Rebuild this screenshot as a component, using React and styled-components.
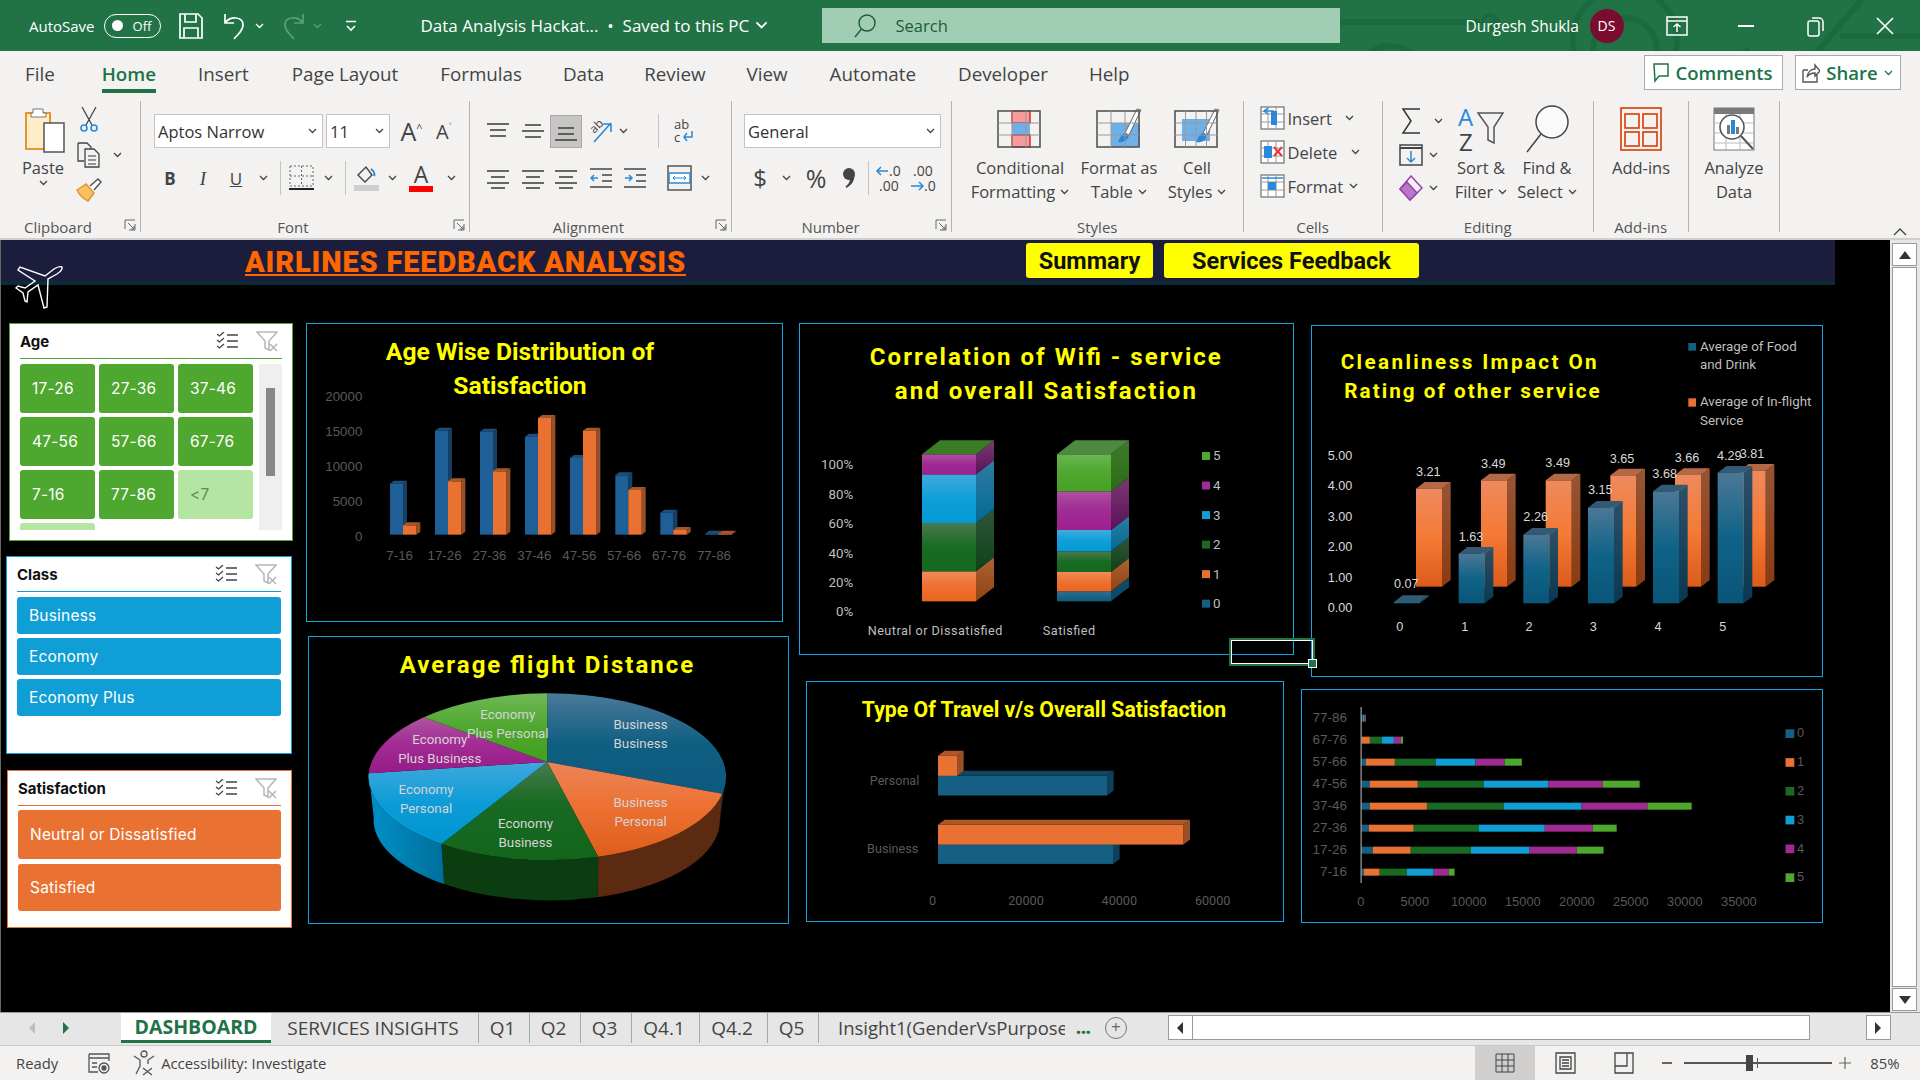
import React from "react"
import styled, { createGlobalStyle } from "styled-components"

const UI = `"Open Sans", "Noto Sans", sans-serif`
const CHART = `Roboto, "Liberation Sans", sans-serif`
const ARIAL = `"Liberation Sans", Arial, sans-serif`

const Global = createGlobalStyle`
html, body { margin: 0; padding: 0; background: #000; overflow: hidden; }
* { box-sizing: border-box; }
`

const Page = styled.div`
width: 1920px;
height: 1080px;
display: flex;
flex-direction: column;
font-family: ${UI};
position: relative;
overflow: hidden;
`

/* ---------- small drawing helpers ---------- */
const Ico = styled.svg`
display: block;
flex: none;
margin-left: ${p => p.$ml || 0}px;
margin-top: ${p => p.$mt || 0}px;
`
const Chev = ({ ml, color = "#444", w = 9 }) => (
  <Ico $ml={ml} width={w} height={(w * 2) / 3} viewBox="0 0 9 6" fill="none"><path d="M1 1l3.5 3.5L8 1" stroke={color} strokeWidth="1.3" /></Ico>
)
const Lines = ({ rows, w = 22, h = 22, ml }) => (
  <Ico $ml={ml} width={w} height={h} viewBox={`0 0 ${w} ${h}`} fill="none">
    {rows.map((r, i) => <line key={i} x1={r[0]} x2={r[1]} y1={r[2]} y2={r[2]} stroke={r[3] || "#444"} strokeWidth="1.6" />)}
  </Ico>
)

/* ---------- title bar ---------- */
const TitleBar = styled.header`
height: 51px;
flex: none;
background: #217346;
color: #fff;
display: flex;
align-items: center;
padding-left: 29px;
position: relative;
overflow: hidden;
`
const Circuit = styled.svg`
position: absolute;
left: 1340px;
top: 0;
`
const TitleSlot = styled.div`
position: relative;
flex: none;
display: flex;
align-items: center;
margin-left: ${p => p.$ml || 0}px;
width: ${p => (p.$w ? p.$w + "px" : "auto")};
font-size: ${p => p.$fs || 15}px;
white-space: nowrap;
`
const Toggle = styled.div`
position: relative;
flex: none;
width: 57px;
height: 24px;
margin-left: 9px;
border: 1.5px solid #fff;
border-radius: 12px;
font-size: 13px;
display: flex;
align-items: center;
padding-left: 28px;
&::before {
  content: "";
  position: absolute;
  left: 7px;
  top: 5px;
  width: 11px;
  height: 11px;
  border-radius: 50%;
  background: #fff;
}
`
const SearchBox = styled.div`
position: relative;
flex: none;
width: 518px;
height: 35px;
background: #a0cdb4;
color: #1c5c3a;
font-size: 16.5px;
display: flex;
align-items: center;
padding-left: 30px;
gap: 18px;
`
const Avatar = styled.div`
position: relative;
flex: none;
width: 34px;
height: 34px;
margin-left: 14px;
border-radius: 50%;
background: #7a0c2e;
font-size: 14px;
display: flex;
align-items: center;
justify-content: center;
`

/* ---------- ribbon ---------- */
const TabRow = styled.nav`
height: 45px;
flex: none;
background: #f3f2f1;
display: flex;
padding-left: 25px;
align-items: flex-start;
position: relative;
`
const Tab = styled.div`
height: 42px;
margin-right: ${p => p.$gap}px;
padding-top: 10px;
font-size: 18.8px;
color: ${p => (p.$active ? "#217346" : "#444")};
font-weight: ${p => (p.$active ? 600 : 400)};
border-bottom: ${p => (p.$active ? "4px solid #217346" : "none")};
white-space: nowrap;
`
const TopBtn = styled.div`
flex: none;
height: 35px;
margin-top: 4px;
margin-left: ${p => p.$ml}px;
width: ${p => p.$w}px;
background: #fff;
border: 1px solid #a9a9a9;
display: flex;
align-items: center;
justify-content: center;
gap: 6px;
color: #217346;
font-weight: 600;
font-size: 18.5px;
`
const Ribbon = styled.section`
height: 144px;
flex: none;
background: #f3f2f1;
border-bottom: 2px solid #d2d0ce;
display: flex;
padding-top: 5px;
position: relative;
`
const Group = styled.div`
position: relative;
flex: none;
width: ${p => p.$w}px;
height: 131px;
border-right: 1px solid #b5b3b1;
display: flex;
flex-direction: column;
`
const GroupBody = styled.div`
flex: 1;
display: flex;
min-height: 0;
padding-left: ${p => p.$pl || 0}px;
flex-direction: ${p => (p.$col ? "column" : "row")};
`
const GroupLabel = styled.div`
height: 20px;
flex: none;
text-align: center;
font-size: 15px;
line-height: 20px;
color: #555;
padding-right: ${p => p.$pr || 0}px;
margin-bottom: -5px;
`
const Launcher = styled.svg`
position: absolute;
right: 4px;
bottom: 1px;
`
const Collapse = styled.svg`
position: absolute;
right: 13px;
bottom: 2px;
`
const Big = styled.div`
flex: none;
width: ${p => p.$w}px;
margin-left: ${p => p.$ml || 0}px;
display: flex;
flex-direction: column;
align-items: center;
padding-top: 4px;
`
const BigIcon = styled.div`
height: 51px;
flex: none;
`
const BigText = styled.div`
font-size: 16.5px;
line-height: 24px;
color: #444;
white-space: nowrap;
display: flex;
align-items: center;
gap: 5px;
`
const ToolRow = styled.div`
display: flex;
align-items: center;
height: ${p => p.$h || 34}px;
margin-top: ${p => p.$mt || 0}px;
margin-left: ${p => p.$ml || 0}px;
`
const ToolCol = styled.div`
flex: none;
width: ${p => p.$w}px;
`
const Combo = styled.div`
flex: none;
width: ${p => p.$w}px;
margin-left: ${p => p.$ml || 0}px;
height: 34px;
background: #fff;
border: 1px solid #c4c4c4;
display: flex;
align-items: center;
justify-content: space-between;
padding: 0 5px 0 3px;
font-size: 16.5px;
color: #333;
`
const ToolGlyph = styled.span`
flex: none;
width: ${p => p.$w}px;
margin-left: ${p => p.$ml || 0}px;
text-align: center;
font-family: ${p => p.$serif ? `"Liberation Serif", serif` : UI};
font-size: ${p => p.$fs || 17}px;
font-weight: ${p => p.$bold ? 700 : 400};
font-style: ${p => p.$it ? "italic" : "normal"};
text-decoration: ${p => p.$ul ? "underline" : "none"};
color: #444;
line-height: 1;
`
const Caret = styled.sup`
font-size: 11px;
color: ${p => p.$c || "#444"};
`
const VSep = styled.span`
flex: none;
width: 1px;
height: ${p => p.$h || 34}px;
background: #c4c4c4;
margin-left: ${p => p.$ml}px;
`
const Selected = styled.div`
flex: none;
margin-left: ${p => p.$ml}px;
width: 32px;
height: 33px;
background: #c8c6c4;
border: 1px solid #aaa;
display: flex;
align-items: center;
justify-content: center;
`
const CellLabel = styled.span`
flex: none;
width: ${p => p.$w}px;
margin-left: 3px;
font-size: 16.5px;
color: #444;
`

/* ---------- sheet ---------- */
const SheetRow = styled.main`
flex: 1;
display: flex;
min-height: 0;
background: #000;
position: relative;
`
const Sheet = styled.div`
position: relative;
width: 1890px;
flex: none;
display: flex;
flex-direction: column;
border-left: 1px solid #666;
`
const Banner = styled.div`
width: 1834px;
height: 45px;
flex: none;
background: #1c1d3d;
border-bottom: 4px solid #0c2b36;
display: flex;
align-items: center;
`
const BannerTitle = styled.h1`
margin: 2px 0 0 244px;
width: 441px;
flex: none;
font-family: ${CHART};
font-weight: 900;
font-size: 29px;
line-height: 32px;
letter-spacing: 0.85px;
color: #ff6600;
white-space: nowrap;
text-decoration: underline;
text-decoration-thickness: 2px;
text-underline-offset: 2px;
`
const NavBtn = styled.div`
flex: none;
margin-left: ${p => p.$ml}px;
width: ${p => p.$w}px;
height: 35px;
background: #ffff00;
border-radius: 3px;
font-family: ${CHART};
font-weight: 700;
font-size: 23.5px;
color: #111;
display: flex;
align-items: center;
justify-content: center;
`
const Plane = styled.svg`
position: absolute;
left: 13px;
top: 24px;
`
const Board = styled.div`
flex: 1;
display: flex;
align-items: flex-start;
`
const Column = styled.div`
flex: none;
width: ${p => p.$w}px;
display: flex;
flex-direction: column;
align-items: flex-start;
`
const SelCell = styled.div`
position: absolute;
left: 1228px;
top: 398px;
width: 86px;
height: 28px;
border: 2px solid #217346;
outline: 1px solid #fff;
outline-offset: -3px;
&::after {
  content: "";
  position: absolute;
  right: -4px;
  bottom: -4px;
  width: 7px;
  height: 7px;
  background: #217346;
  border: 1px solid #fff;
}
`

/* ---------- slicers ---------- */
const Slicer = styled.section`
flex: none;
width: ${p => p.$w}px;
height: ${p => p.$h}px;
margin-top: ${p => p.$mt}px;
margin-left: ${p => p.$ml || 0}px;
background: #fff;
border: 1.5px solid ${p => p.$accent};
padding: 0 10px;
`
const SlicerHead = styled.div`
height: ${p => p.$h || 35}px;
border-bottom: 1.5px solid ${p => p.$accent};
display: flex;
align-items: center;
font-family: Inter, sans-serif;
font-weight: 700;
font-size: 15px;
color: #111;
`
const SlicerTools = styled.div`
margin-left: auto;
margin-right: 4px;
display: flex;
align-items: center;
gap: 18px;
`
const AgeBody = styled.div`
display: flex;
margin-top: 5px;
height: 166px;
overflow: hidden;
`
const AgeGrid = styled.div`
width: 233px;
flex: none;
display: grid;
grid-template-columns: repeat(3, 75px);
grid-auto-rows: 49px;
gap: 4px;
`
const Scroll = styled.div`
flex: none;
width: 23px;
margin-left: 6px;
background: #efefef;
padding: 24px 7px 0;
&::before {
  content: "";
  display: block;
  height: 88px;
  background: #888;
}
`
const ClassList = styled.div`
display: flex;
flex-direction: column;
gap: ${p => p.$gap || 4}px;
margin-top: ${p => p.$mt || 5}px;
`
const Item = styled.div`
height: ${p => p.$h}px;
border-radius: 3px;
background: ${p => p.$bg};
color: ${p => p.$fg || "#fff"};
font-family: Inter, sans-serif;
font-size: 15.5px;
letter-spacing: 0.2px;
display: flex;
align-items: center;
padding-left: ${p => p.$pl || 12}px;
white-space: nowrap;
`

/* ---------- charts ---------- */
const ChartBox = styled.section`
flex: none;
width: ${p => p.$w}px;
height: ${p => p.$h}px;
margin-top: ${p => p.$mt}px;
margin-left: ${p => p.$ml || 0}px;
outline: 1.2px solid #0ea5e0;
outline-offset: -1px;
`
const ChartSvg = styled.svg`
display: block;
width: 100%;
height: 100%;
`
const ChartTitle = styled.text`
font-family: ${CHART};
font-weight: 700;
font-size: ${p => p.$fs || 69}px;
fill: #ffff00;
text-anchor: middle;
`
const Axis = styled.text`
font-family: ${p => p.$arial ? ARIAL : CHART};
font-size: ${p => p.$fs || 38}px;
fill: ${p => p.$fill || "#595959"};
text-anchor: ${p => p.$anchor || "middle"};
dominant-baseline: central;
`

const Bar3D = ({ x, y, w, b, dx, dy, front, top, side }) => (
  <g>
    <path d={`M${x + w} ${y}l${dx} ${dy}V${b + dy}L${x + w} ${b}Z`} fill={side} />
    {top && <path d={`M${x} ${y}h${w}l${dx} ${dy}h${-w}Z`} fill={top} />}
    <rect x={x} y={y} width={w} height={b - y} fill={front} />
  </g>
)
const VGrad = ({ id, stops }) => (
  <linearGradient id={id} x1="0" y1="0" x2="0" y2="1">
    {stops.map((s, i) => <stop key={i} offset={s[0]} stopColor={s[1]} />)}
  </linearGradient>
)

const ageBars = [
  [270, 507, 632], [405, 348, 500], [540, 351, 470], [675, 366, 310],
  [810, 430, 348], [946, 482, 526], [1081, 594, 646], [1216, 657, 657],
]
const ageLabels = ["7-16", "17-26", "27-36", "37-46", "47-56", "57-66", "67-76", "77-86"]

function AgeChart() {
  return (
    <ChartSvg viewBox="18 25 1431 897" preserveAspectRatio="none">
      <ChartTitle x="660" y="135" textLength="805" lengthAdjust="spacingAndGlyphs">Age Wise Distribution of</ChartTitle>
      <ChartTitle x="660" y="238" textLength="400" lengthAdjust="spacingAndGlyphs">Satisfaction</ChartTitle>
      {["20000", "15000", "10000", "5000", "0"].map((t, i) => (
        <Axis key={t} $arial $fs={40} $anchor="end" x="187" y={247 + i * 105}>{t}</Axis>
      ))}
      {ageBars.map((b, i) => (
        <g key={i}>
          <Bar3D x={b[0]} y={b[1]} w={39} b={660} dx={12} dy={-9} front="#1f5f97" top="#1d4f7c" side="#173f63" />
          <Bar3D x={b[0] + 39} y={b[2]} w={40} b={660} dx={12} dy={-9} front="#e97132" top="#a9562a" side="#97502a" />
        </g>
      ))}
      {ageLabels.map((t, i) => <Axis key={t} $arial $fs={40} x={299 + i * 134.7} y="723">{t}</Axis>)}
    </ChartSvg>
  )
}

const wifiColors = {
  navy: ["url(#w-navy)", "#0e4a68"],
  orange: ["url(#w-orange)", "url(#w-orange-s)"],
  dgreen: ["url(#w-dgreen)", "url(#w-dgreen-s)"],
  blue: ["url(#w-blue)", "url(#w-blue-s)"],
  purple: ["url(#w-purple)", "url(#w-purple-s)"],
  green: ["url(#w-green)", "url(#w-green-s)"],
}
const wifiStacks = [
  { x: 381, segs: [["orange", 845, 755], ["dgreen", 755, 610], ["blue", 610, 464], ["purple", 464, 404]], top: "#3a7d26" },
  { x: 786, segs: [["navy", 845, 815], ["orange", 815, 757], ["dgreen", 757, 695], ["blue", 695, 631], ["purple", 631, 515], ["green", 515, 404]], top: "#4d8a3f" },
]
const legendColors = ["#156082", "#e97132", "#196b24", "#0f9ed5", "#a02b93", "#4ea72e"]

function WifiChart() {
  return (
    <ChartSvg viewBox="12 10 1485 996" preserveAspectRatio="none">
      <defs>
        <VGrad id="w-navy" stops={[[0, "#2f6d8d"], [1, "#0e5a7c"]]} />
        <VGrad id="w-orange" stops={[[0, "#f28a58"], [0.5, "#ee7030"], [1, "#ec651f"]]} />
        <VGrad id="w-orange-s" stops={[[0, "#ac6236"], [1, "#91430f"]]} />
        <VGrad id="w-dgreen" stops={[[0, "#4a7a50"], [0.5, "#186c22"], [1, "#15691e"]]} />
        <VGrad id="w-dgreen-s" stops={[[0, "#30543a"], [1, "#0f4215"]]} />
        <VGrad id="w-blue" stops={[[0, "#40a9de"], [0.5, "#0f9fd8"], [1, "#049ad6"]]} />
        <VGrad id="w-blue-s" stops={[[0, "#2f7ba5"], [1, "#026a93"]]} />
        <VGrad id="w-purple" stops={[[0, "#ae519f"], [0.5, "#a02b93"], [1, "#9e1f8e"]]} />
        <VGrad id="w-purple-s" stops={[[0, "#763c70"], [1, "#5e1058"]]} />
        <VGrad id="w-green" stops={[[0, "#6ab651"], [0.5, "#4ea72e"], [1, "#45a322"]]} />
        <VGrad id="w-green-s" stops={[[0, "#3f7a2e"], [1, "#2b6c14"]]} />
      </defs>
      <ChartTitle $fs={72} x="751" y="135" textLength="1053" lengthAdjust="spacing">Correlation of Wifi - service</ChartTitle>
      <ChartTitle $fs={72} x="751" y="238" textLength="903" lengthAdjust="spacing">and overall Satisfaction</ChartTitle>
      {["100%", "80%", "60%", "40%", "20%", "0%"].map((t, i) => (
        <Axis key={t} $fs={40} $fill="#bfbfbf" $anchor="end" x="175" y={436 + i * 88.2}>{t}</Axis>
      ))}
      {wifiStacks.map(st => (
        <g key={st.x}>
          {st.segs.map(([c, b, y], i) => (
            <Bar3D key={c} x={st.x} y={y} w={162} b={b} dx={54} dy={-42} front={wifiColors[c][0]}
              side={wifiColors[c][1]} top={i === st.segs.length - 1 ? st.top : null} />
          ))}
        </g>
      ))}
      <Axis $fill="#bfbfbf" x="420" y="934" textLength="404">Neutral or Dissatisfied</Axis>
      <Axis $fill="#bfbfbf" x="822" y="934" textLength="157">Satisfied</Axis>
      {[5, 4, 3, 2, 1, 0].map((n, i) => {
        const cy = 409 + i * 88.6
        return (
          <g key={n}>
            <rect x="1221" y={cy - 12} width="24" height="24" fill={legendColors[n]} />
            <Axis $fs={40} $fill="#bfbfbf" $anchor="start" x="1254" y={cy}>{n}</Axis>
          </g>
        )
      })}
    </ChartSvg>
  )
}

const cleanOrange = [[333, 506, "3.21", 370, 456], [528, 481, "3.49", 565, 432], [722, 481, "3.49", 758, 429],
  [916, 466, "3.65", 951, 417], [1110, 465, "3.66", 1146, 414], [1304, 452, "3.81", 1341, 403]]
const cleanBlue = [[267, 846, "0.07", 304, 792], [461, 701, "1.63", 498, 651], [655, 644, "2.26", 692, 592],
  [849, 563, "3.15", 886, 510], [1044, 514, "3.68", 1079, 461], [1238, 458, "4.29", 1273, 408]]

function CleanChart() {
  return (
    <ChartSvg viewBox="18 15 1536 1056" preserveAspectRatio="none">
      <defs>
        <VGrad id="c-or" stops={[[0, "#ee8a5e"], [0.5, "#f47a35"], [1, "#dd5c1b"]]} />
        <VGrad id="c-ors" stops={[[0, "#975535"], [1, "#8a3b12"]]} />
        <VGrad id="c-bl" stops={[[0, "#4b7896"], [0.5, "#0f6388"], [1, "#0a5578"]]} />
        <VGrad id="c-bls" stops={[[0, "#2d4f68"], [1, "#0a3850"]]} />
      </defs>
      <ChartTitle $fs={62} x="491" y="147" textLength="768" lengthAdjust="spacing">Cleanliness Impact On</ChartTitle>
      <ChartTitle $fs={62} x="501" y="233" textLength="766" lengthAdjust="spacing">Rating of other service</ChartTitle>
      <rect x="1150" y="69" width="23" height="23" fill="#156082" />
      <Axis $fs={40} $fill="#bfbfbf" $anchor="start" x="1185" y="79">Average of Food</Axis>
      <Axis $fs={40} $fill="#bfbfbf" $anchor="start" x="1185" y="133">and Drink</Axis>
      <rect x="1150" y="235" width="23" height="25" fill="#e97132" />
      <Axis $fs={40} $fill="#bfbfbf" $anchor="start" x="1185" y="245">Average of In-flight</Axis>
      <Axis $fs={40} $fill="#bfbfbf" $anchor="start" x="1185" y="301">Service</Axis>
      {["5.00", "4.00", "3.00", "2.00", "1.00", "0.00"].map((t, i) => (
        <Axis key={t} $arial $fill="#d9d9d9" $anchor="end" x="142" y={408 + i * 91.4}>{t}</Axis>
      ))}
      {cleanOrange.map(b => <Bar3D key={b[0]} x={b[0]} y={b[1]} w={78} b={800} dx={26} dy={-20} front="url(#c-or)" top="#b46843" side="url(#c-ors)" />)}
      {cleanBlue.map(b => <Bar3D key={b[0]} x={b[0]} y={b[1]} w={78} b={850} dx={26} dy={-20} front="url(#c-bl)" top="#335a75" side="url(#c-bls)" />)}
      {[...cleanOrange, ...cleanBlue].map(b => <Axis key={b[0]} $arial $fill="#d9d9d9" x={b[3]} y={b[4]}>{b[2]}</Axis>)}
      {[284, 479, 672, 865, 1059, 1253].map((x, i) => <Axis key={x} $arial $fill="#d9d9d9" x={x} y="921">{i}</Axis>)}
    </ChartSvg>
  )
}

const pieTop = [
  ["p-navy", "M742 396L742 190A535 250 0 0 1 1267 491Z"],
  ["p-orange", "M742 396L1267 491A535 250 0 0 1 895 680Z"],
  ["p-dgreen", "M742 396L895 680A535 250 0 0 1 425 642Z"],
  ["p-blue", "M742 396L425 642A535 250 0 0 1 207 430Z"],
  ["p-purple", "M742 396L207 430A535 250 0 0 1 372 262Z"],
  ["p-green", "M742 396L372 262A535 250 0 0 1 742 190Z"],
]
const pieLabels = [
  ["Economy", 624, 253], ["Plus Personal", 624, 310], ["Economy", 420, 328], ["Plus Business", 420, 385],
  ["Economy", 379, 478], ["Personal", 379, 535], ["Economy", 677, 580], ["Business", 677, 637],
  ["Business", 1022, 283], ["Business", 1022, 340], ["Business", 1022, 517], ["Personal", 1022, 574],
]

function PieChart() {
  return (
    <ChartSvg viewBox="25 18 1442 864" preserveAspectRatio="none">
      <defs>
        <VGrad id="p-navy" stops={[[0, "#4a7a9a"], [0.5, "#0f5f82"], [1, "#0c5a7e"]]} />
        <VGrad id="p-orange" stops={[[0, "#ed8458"], [0.5, "#ec7030"], [1, "#df5d1c"]]} />
        <VGrad id="p-dgreen" stops={[[0, "#4a7c50"], [0.4, "#196b24"], [1, "#13651c"]]} />
        <VGrad id="p-blue" stops={[[0, "#3fa8dc"], [0.5, "#0c9cd8"], [1, "#0096d0"]]} />
        <VGrad id="p-purple" stops={[[0, "#ad559f"], [0.5, "#a22a94"], [1, "#961b88"]]} />
        <VGrad id="p-green" stops={[[0, "#70b857"], [0.5, "#4ea72e"], [1, "#43a01f"]]} />
        <linearGradient id="p-side" x1="0" y1="0" x2="1" y2="0">
          <stop offset="0" stopColor="#0090c8" />
          <stop offset="1" stopColor="#006f9c" />
        </linearGradient>
      </defs>
      <ChartTitle $fs={72} x="740" y="130" textLength="880" lengthAdjust="spacing">Average flight Distance</ChartTitle>
      <path d="M1267 491L1277 440L1258 592Z" fill="#0a3550" />
      <path d="M1267 491A535 250 0 0 1 895 680L893 802A520 240 0 0 0 1258 592Z" fill="#5c2a10" />
      <path d="M895 680A535 250 0 0 1 425 642L433 762A520 240 0 0 0 893 802Z" fill="#0b3d10" />
      <path d="M425 642A535 250 0 0 1 207 430L222 560A520 240 0 0 0 433 762Z" fill="url(#p-side)" />
      {pieTop.map(([id, d]) => <path key={id} d={d} fill={`url(#${id})`} />)}
      {pieLabels.map(([t, x, y], i) => <Axis key={i} $fs={40} $fill="#d4d4d4" x={x} y={y}>{t}</Axis>)}
    </ChartSvg>
  )
}

function TravelChart() {
  const blue = { front: "#156082", top: "#10465f", side: "#0f4059" }
  const orange = { front: "#e97132", top: "#b05729", side: "#9a4f28" }
  return (
    <ChartSvg viewBox="18 4 1434 722" preserveAspectRatio="none">
      <ChartTitle $fs={66} x="732" y="113" textLength="1093" lengthAdjust="spacingAndGlyphs">Type Of Travel v/s Overall Satisfaction</ChartTitle>
      <Axis $anchor="end" x="358" y="301">Personal</Axis>
      <Axis $anchor="end" x="355" y="505">Business</Axis>
      <Bar3D x={414} y={288} w={507} b={347} dx={20} dy={-15} {...blue} />
      <Bar3D x={414} y={228} w={57} b={288} dx={20} dy={-15} {...orange} />
      <Bar3D x={414} y={494} w={525} b={552} dx={20} dy={-15} {...blue} />
      <Bar3D x={414} y={435} w={736} b={494} dx={20} dy={-15} {...orange} />
      {["0", "20000", "40000", "60000"].map((t, i) => <Axis key={t} x={398 + i * 280} y="663">{t}</Axis>)}
    </ChartSvg>
  )
}

const stackRows = [
  ["77-86", 105, [197, 198, 199, 201, 205, 208, 210]],
  ["67-76", 171, [197, 198, 222, 258, 293, 314, 320]],
  ["57-66", 237, [197, 210, 296, 417, 535, 621, 672]],
  ["47-56", 303, [197, 222, 364, 559, 751, 912, 1021]],
  ["37-46", 369, [197, 222, 391, 618, 849, 1044, 1175]],
  ["27-36", 435, [197, 219, 352, 544, 740, 882, 953]],
  ["17-26", 501, [197, 231, 343, 521, 695, 835, 914]],
  ["7-16", 567, [197, 204, 251, 331, 411, 456, 473]],
]

function StackChart() {
  return (
    <ChartSvg viewBox="18 28 1546 702" preserveAspectRatio="none">
      {stackRows.map(([label, y, xs]) => (
        <g key={label}>
          <Axis $arial $fs={40} $anchor="end" x="154" y={y + 10}>{label}</Axis>
          {legendColors.map((c, i) => <rect key={i} x={xs[i]} y={y} width={xs[i + 1] - xs[i]} height="21" fill={c} />)}
        </g>
      ))}
      <line x1="196" x2="196" y1="82" y2="610" stroke="#e8e8e8" strokeWidth="2.5" />
      {["0", "5000", "10000", "15000", "20000", "25000", "30000", "35000"].map((t, i) => (
        <Axis key={t} $arial $fs={38} x={195 + i * 160} y="667">{t}</Axis>
      ))}
      {legendColors.map((c, i) => {
        const cy = 162 + i * 86.4
        return (
          <g key={c}>
            <rect x="1453" y={cy - 13} width="26" height="26" fill={c} />
            <Axis $arial $fs={38} $anchor="start" x="1487" y={cy - 2}>{i}</Axis>
          </g>
        )
      })}
    </ChartSvg>
  )
}

/* ---------- bottom bars ---------- */
const TabBar = styled.div`
height: 34px;
flex: none;
background: #e6e6e6;
border-top: 1px solid #9a9a9a;
border-bottom: 1px solid #c8c8c8;
padding-bottom: 3px;
display: flex;
align-items: center;
`
const NavArrow = styled.span`
flex: none;
width: 0;
height: 0;
margin-left: ${p => p.$ml}px;
border-top: 6px solid transparent;
border-bottom: 6px solid transparent;
border-left: ${p => (p.$dir === "r" ? `6px solid ${p.$c}` : "none")};
border-right: ${p => (p.$dir === "l" ? `6px solid ${p.$c}` : "none")};
`
const SheetTab = styled.div`
flex: none;
height: 30px;
width: ${p => p.$w}px;
margin-left: ${p => p.$ml || 0}px;
padding-right: ${p => (p.$sep ? 3 : 0)}px;
display: flex;
align-items: center;
justify-content: center;
font-size: ${p => (p.$active ? 19.5 : 19)}px;
white-space: nowrap;
overflow: hidden;
color: ${p => (p.$active ? "#217346" : "#444")};
font-weight: ${p => (p.$active ? 700 : 400)};
background: ${p => (p.$active ? "#fff" : "transparent")};
border-bottom: ${p => (p.$active ? "3px solid #217346" : "none")};
border-right: ${p => (p.$sep ? "1px solid #a8a8a8" : "none")};
`
const SheetOverflow = styled.div`
flex: none;
width: 227px;
margin-left: 19px;
font-size: 18.5px;
color: #444;
white-space: nowrap;
overflow: hidden;
`
const More = styled.span`
flex: none;
margin-left: 11px;
color: #217346;
font-weight: 800;
font-size: 17px;
`
const AddSheet = styled.span`
flex: none;
margin-left: 14px;
width: 22px;
height: 22px;
border-radius: 50%;
border: 1.4px solid #777;
color: #666;
font-size: 17px;
line-height: 18px;
text-align: center;
`
const HScroll = styled.div`
flex: none;
margin-left: 41px;
width: 723px;
height: 25px;
display: flex;
`
const ScrollBtn = styled.div`
flex: none;
width: 25px;
background: #fff;
border: 1px solid #9a9a9a;
margin-left: ${p => p.$ml || 0}px;
display: flex;
align-items: center;
justify-content: center;
`
const HThumb = styled.div`
flex: none;
width: 617px;
background: #fff;
border: 1px solid #9a9a9a;
border-left: none;
`
const StatusBar = styled.footer`
flex: none;
height: 34px;
background: #f3f2f1;
display: flex;
align-items: center;
padding-left: 16px;
font-size: 14.8px;
color: #444;
white-space: nowrap;
`
const StatusText = styled.span`
flex: none;
margin-left: ${p => p.$ml}px;
`
const ViewBtn = styled.div`
flex: none;
height: 34px;
width: 60px;
margin-left: ${p => p.$ml || 0}px;
background: ${p => (p.$on ? "#d0cfce" : "transparent")};
display: flex;
align-items: center;
justify-content: center;
`
const Zoomer = styled.div`
flex: none;
position: relative;
margin-left: 12px;
width: 148px;
height: 2px;
background: #555;
&::before {
  content: "";
  position: absolute;
  left: 62px;
  top: -7px;
  width: 7px;
  height: 16px;
  background: #444;
}
&::after {
  content: "";
  position: absolute;
  left: 73px;
  top: -4px;
  width: 1px;
  height: 10px;
  background: #555;
}
`
const VScroll = styled.aside`
flex: none;
width: 30px;
background: #e6e6e6;
display: flex;
flex-direction: column;
align-items: flex-start;
padding: 3px 0 1px 2px;
gap: 1px;
`
const VBtn = styled.div`
width: 25px;
height: 23px;
flex: none;
background: #fff;
border: 1px solid #9a9a9a;
display: flex;
align-items: center;
justify-content: center;
`
const VThumb = styled.div`
width: 25px;
flex: 1;
background: #fff;
border: 1px solid #9a9a9a;
`

/* ---------- ribbon icons ---------- */
const Grid = ({ w = 42, h = 36, rows = 3, cols = 3, children }) => (
  <Ico $mt={3} width={w + 4} height={h + 6} viewBox={`0 0 ${w + 4} ${h + 6}`} fill="none">
    {children}
    <rect x="1" y="3" width={w} height={h} stroke="#555" strokeWidth="1.6" />
    {Array.from({ length: rows - 1 }).map((_, i) => <line key={i} x1="1" x2={w + 1} y1={3 + ((i + 1) * h) / rows} y2={3 + ((i + 1) * h) / rows} stroke="#999" />)}
    {Array.from({ length: cols - 1 }).map((_, i) => <line key={i} y1="3" y2={h + 3} x1={1 + ((i + 1) * w) / cols} x2={1 + ((i + 1) * w) / cols} stroke="#999" />)}
  </Ico>
)
const Brush = () => (
  <g>
    <path d="M45 2L33 27l-4-2L41 1z" fill="#fff" stroke="#666" />
    <path d="M29 25c-4 1-5 5-7 9 5 1 10-1 11-7z" fill="#2b88d8" />
  </g>
)
const CellSmall = ({ children }) => (
  <Ico width="25" height="24" viewBox="0 0 25 24" fill="none">
    <rect x="1" y="1" width="23" height="22" fill="#fff" stroke="#555" />
    <path d="M1 8h23M1 16h23M8 1v22M16 1v22" stroke="#999" />
    {children}
  </Ico>
)
const LauncherIcon = () => (
  <Launcher width="12" height="12" viewBox="0 0 12 12" fill="none" stroke="#666"><path d="M1 10V1h10M11 5v6H5M4 4l6 6M10 7v3H7" /></Launcher>
)
function SlicerToolsRow() {
  return (
    <SlicerTools>
      <Ico width="22" height="18" viewBox="0 0 22 18" fill="none" stroke="#444" strokeWidth="1.3">
        <path d="M1 2l2.5 2L8 0M1 8l2.5 2L8 6M1 14l2.5 2L8 12M11 3h11M11 9h11M11 15h11" />
      </Ico>
      <Ico width="22" height="22" viewBox="0 0 22 22" fill="none" stroke="#b5b5b5" strokeWidth="1.5">
        <path d="M1 2h20l-8 9v9l-4-2v-7zM14 14l7 7M21 14l-7 7" />
      </Ico>
    </SlicerTools>
  )
}

export default function App() {
  return (
    <Page>
      <Global />
      <TitleBar>
        <Circuit width="580" height="51" fill="none" stroke="#1b6a3d" strokeWidth="6">
          <path d="M0 22h140M150 22h10" />
          <circle cx="150" cy="22" r="7" strokeWidth="4" />
          <circle cx="285" cy="40" r="52" />
          <circle cx="285" cy="50" r="32" />
          <path d="M20 70c10-30 40-30 60-10M470 60l60-70M500 36h80M390 60l20-10" />
        </Circuit>
        <TitleSlot $fs={15}>AutoSave</TitleSlot>
        <Toggle>Off</Toggle>
        <TitleSlot $ml={18}>
          <Ico width="24" height="26" viewBox="0 0 24 26" fill="none" stroke="#fff" strokeWidth="1.7">
            <path d="M1 1h18l4 4v20H1zM6 1v8h11V1M5 25V15h14v10" />
          </Ico>
        </TitleSlot>
        <TitleSlot $ml={19}>
          <Ico width="24" height="28" viewBox="0 0 24 28" fill="none" stroke="#fff" strokeWidth="1.7">
            <path d="M3 2v9h9M3 11C8 4 21 4 21 13c0 6-5 9-9 14" />
          </Ico>
          <Chev ml={9} color="#fff" />
        </TitleSlot>
        <TitleSlot $ml={18}>
          <Ico width="24" height="28" viewBox="0 0 24 28" fill="none" stroke="#5aa07a" strokeWidth="1.7">
            <path d="M21 2v9h-9M21 11C16 4 3 4 3 13c0 6 5 9 9 14" />
          </Ico>
          <Chev ml={7} color="#5aa07a" />
        </TitleSlot>
        <TitleSlot $ml={23}>
          <Ico width="12" height="12" viewBox="0 0 12 12" fill="none" stroke="#fff" strokeWidth="1.6">
            <path d="M1 1.5h10M2 6l4 4 4-4" />
          </Ico>
        </TitleSlot>
        <TitleSlot $ml={64} $w={401} $fs={17}>
          Data Analysis Hackat... &nbsp;•&nbsp; Saved to this PC
          <Chev ml={6} color="#fff" w={13} />
        </TitleSlot>
        <SearchBox>
          <Ico width="26" height="26" viewBox="0 0 26 26" fill="none" stroke="#1c5c3a" strokeWidth="1.4">
            <circle cx="15" cy="10" r="8" /><path d="M9.5 16L3 24" />
          </Ico>
          Search
        </SearchBox>
        <TitleSlot $ml={126} $w={110} $fs={15.5}>Durgesh Shukla</TitleSlot>
        <Avatar>DS</Avatar>
        <TitleSlot $ml={42}>
          <Ico width="22" height="20" viewBox="0 0 22 20" fill="none" stroke="#fff" strokeWidth="1.5">
            <path d="M1 1h20v18H1zM1 5h20M11 16V8M7.5 11L11 8l3.5 3" />
          </Ico>
        </TitleSlot>
        <TitleSlot $ml={50}>
          <Ico width="16" height="2" viewBox="0 0 16 2"><rect width="16" height="2" fill="#fff" /></Ico>
        </TitleSlot>
        <TitleSlot $ml={53}>
          <Ico width="17" height="22" viewBox="0 0 17 22" fill="none" stroke="#fff" strokeWidth="1.5">
            <rect x="1" y="6" width="11" height="15" rx="2" /><path d="M5 3h7a4 4 0 0 1 4 4v9" />
          </Ico>
        </TitleSlot>
        <TitleSlot $ml={51}>
          <Ico width="20" height="20" viewBox="0 0 20 20" fill="none" stroke="#fff" strokeWidth="1.7">
            <path d="M2 2l16 16M18 2L2 18" />
          </Ico>
        </TitleSlot>
      </TitleBar>

      <TabRow>
        <Tab $gap={47}>File</Tab>
        <Tab $active $gap={42}>Home</Tab>
        <Tab $gap={43}>Insert</Tab>
        <Tab $gap={42}>Page Layout</Tab>
        <Tab $gap={41}>Formulas</Tab>
        <Tab $gap={40}>Data</Tab>
        <Tab $gap={41}>Review</Tab>
        <Tab $gap={42}>View</Tab>
        <Tab $gap={42}>Automate</Tab>
        <Tab $gap={41}>Developer</Tab>
        <Tab $gap={0}>Help</Tab>
        <TopBtn $ml={514} $w={139}>
          <Ico width="16" height="22" viewBox="0 0 16 22" fill="none" stroke="#217346" strokeWidth="1.5">
            <path d="M1 2h14v12H6l-4 5z" />
          </Ico>
          Comments
        </TopBtn>
        <TopBtn $ml={12} $w={106}>
          <Ico width="18" height="22" viewBox="0 0 18 22" fill="none" stroke="#555" strokeWidth="1.4">
            <path d="M1 8h5M1 8v12h14v-7M5 15c1-6 5-8 8-8V3l5 6-5 5v-3c-3 0-6 1-8 4z" />
          </Ico>
          Share
          <Chev color="#217346" />
        </TopBtn>
      </TabRow>

      <Ribbon>
        <Group $w={141}>
          <GroupBody>
            <Big $w={66} $ml={10}>
              <BigIcon>
                <Ico $ml={4} width="42" height="48" viewBox="0 0 42 48" fill="none">
                  <path d="M2 8h24v36H2z" fill="#fdeec8" stroke="#e3952e" strokeWidth="2" />
                  <path d="M9 8V4h10v4h3v4H7V8z" fill="#fff" stroke="#777" />
                  <rect x="20" y="18" width="20" height="29" fill="#fff" stroke="#555" strokeWidth="1.5" />
                </Ico>
              </BigIcon>
              <BigText>Paste</BigText>
              <Chev ml={0} />
            </Big>
            <ToolCol $w={60}>
              <ToolRow $h={33} $mt={1} $ml={2}>
                <Ico width="22" height="26" viewBox="0 0 22 26" fill="none" stroke="#444" strokeWidth="1.3">
                  <path d="M4 1l10 18M18 1L8 19" />
                  <circle cx="6" cy="22" r="3" stroke="#2b88d8" strokeWidth="1.6" />
                  <circle cx="16" cy="22" r="3" stroke="#2b88d8" strokeWidth="1.6" />
                </Ico>
              </ToolRow>
              <ToolRow $h={36} $mt={2} $ml={1}>
                <Ico width="24" height="26" viewBox="0 0 24 26" fill="none" stroke="#444" strokeWidth="1.3">
                  <path d="M1 1h9l4 4v2M1 1v18h6" />
                  <path d="M8 7h9l5 5v13H8z" fill="#f3f2f1" /><path d="M11 14h8M11 18h8M11 22h8" stroke="#777" />
                </Ico>
                <Chev ml={12} />
              </ToolRow>
              <ToolRow $h={34}>
                <Ico width="26" height="24" viewBox="0 0 26 24" fill="none" stroke="#e3952e" strokeWidth="1.5">
                  <path d="M1 12l9-6 8 9-6 8c-3-1-9-6-11-11z" fill="#f8c060" />
                  <path d="M14 8L22 1l3 3-7 8" stroke="#555" fill="#fff" />
                </Ico>
              </ToolRow>
            </ToolCol>
          </GroupBody>
          <GroupLabel $pr={24}>Clipboard</GroupLabel>
          <LauncherIcon />
        </Group>

        <Group $w={329}>
          <GroupBody $col $pl={13}>
            <ToolRow $mt={13} $h={34}>
              <Combo $w={169}>Aptos Narrow<Chev /></Combo>
              <Combo $w={64} $ml={3}>11<Chev /></Combo>
              <ToolGlyph $w={27} $ml={8} $fs={25}>A<Caret>^</Caret></ToolGlyph>
              <ToolGlyph $w={22} $ml={8} $fs={20}>A<Caret $c="#2b88d8">˅</Caret></ToolGlyph>
            </ToolRow>
            <ToolRow $mt={13} $h={34}>
              <ToolGlyph $w={22} $ml={5} $bold>B</ToolGlyph>
              <ToolGlyph $w={16} $ml={14} $serif $it $fs={19}>I</ToolGlyph>
              <ToolGlyph $w={20} $ml={15} $ul>U</ToolGlyph>
              <Chev ml={13} />
              <VSep $ml={12} />
              <Ico $ml={8} width="25" height="26" viewBox="0 0 25 26" fill="none">
                <rect x="1" y="1" width="23" height="20" stroke="#666" strokeDasharray="2 2" />
                <path d="M12.5 1v20M1 11h23" stroke="#666" strokeDasharray="2 2" />
                <rect x="0" y="23" width="25" height="2" fill="#222" />
              </Ico>
              <Chev ml={10} />
              <VSep $ml={12} />
              <Ico $ml={8} width="25" height="28" viewBox="0 0 25 28" fill="none">
                <path d="M4 11l8-8 6 8-7 7z" stroke="#444" strokeWidth="1.4" />
                <path d="M17 5c3 2 4 5 3 7" stroke="#2b88d8" strokeWidth="2" />
                <rect y="21" width="25" height="6" fill="#cfcfcf" />
              </Ico>
              <Chev ml={9} />
              <Ico $ml={12} width="24" height="30" viewBox="0 0 24 30">
                <text x="12" y="20" textAnchor="middle" fontSize="23" fill="#444" fontFamily={UI}>A</text>
                <rect x="0" y="23" width="24" height="6" fill="#f00" />
              </Ico>
              <Chev ml={14} />
            </ToolRow>
          </GroupBody>
          <GroupLabel $pr={24}>Font</GroupLabel>
          <LauncherIcon />
        </Group>

        <Group $w={262}>
          <GroupBody $col $pl={17}>
            <ToolRow $mt={13} $h={34}>
              <Lines rows={[[0, 22, 4], [3, 19, 10], [3, 19, 16]]} />
              <Lines ml={13} rows={[[3, 19, 5], [0, 22, 11], [3, 19, 17]]} />
              <Selected $ml={6}><Lines rows={[[3, 19, 8], [3, 19, 14], [0, 22, 20]]} /></Selected>
              <Ico $ml={7} width="25" height="28" viewBox="0 0 25 28" fill="none">
                <text x="1" y="13" fontSize="12" fill="#444" transform="rotate(-45 8 10)" fontFamily={UI}>ab</text>
                <path d="M5 25L22 6M14 7h8v8" stroke="#2b88d8" strokeWidth="1.6" />
              </Ico>
              <Chev ml={5} />
              <VSep $ml={30} $h={34} />
              <Ico $ml={14} width="22" height="28" viewBox="0 0 22 28" fill="none">
                <text x="1" y="12" fontSize="13" fill="#444" fontFamily={UI}>ab</text>
                <text x="1" y="25" fontSize="13" fill="#444" fontFamily={UI}>c</text>
                <path d="M19 14v6h-8M14 16l-3 4 3 4" stroke="#2b88d8" strokeWidth="1.5" />
              </Ico>
            </ToolRow>
            <ToolRow $mt={13} $h={34}>
              <Lines rows={[[0, 22, 4], [4, 18, 10], [0, 22, 16], [4, 18, 21]]} />
              <Lines ml={13} rows={[[0, 22, 4], [4, 18, 10], [0, 22, 16], [4, 18, 21]]} />
              <Lines ml={11} rows={[[0, 22, 4], [4, 18, 10], [0, 22, 16], [4, 18, 21]]} />
              <Ico $ml={13} width="22" height="22" viewBox="0 0 22 22" fill="none">
                <path d="M0 2h22M12 8h10M12 14h10M0 20h22" stroke="#444" strokeWidth="1.5" />
                <path d="M8 11H1M4 8l-3 3 3 3" stroke="#2b88d8" strokeWidth="1.5" />
              </Ico>
              <Ico $ml={12} width="22" height="22" viewBox="0 0 22 22" fill="none">
                <path d="M0 2h22M12 8h10M12 14h10M0 20h22" stroke="#444" strokeWidth="1.5" />
                <path d="M1 11h7M5 8l3 3-3 3" stroke="#2b88d8" strokeWidth="1.5" />
              </Ico>
              <Ico $ml={21} width="25" height="26" viewBox="0 0 25 26" fill="none">
                <rect x="1" y="1" width="23" height="24" stroke="#555" strokeWidth="1.5" />
                <rect x="2" y="8" width="21" height="10" fill="#fff" stroke="#2b88d8" strokeWidth="1.5" />
                <path d="M6 13h13M8 11l-2 2 2 2M17 11l2 2-2 2" stroke="#2b88d8" />
              </Ico>
              <Chev ml={9} />
            </ToolRow>
          </GroupBody>
          <GroupLabel $pr={24}>Alignment</GroupLabel>
          <LauncherIcon />
        </Group>

        <Group $w={220}>
          <GroupBody $col $pl={12}>
            <ToolRow $mt={13} $h={34}>
              <Combo $w={197}>General<Chev /></Combo>
            </ToolRow>
            <ToolRow $mt={13} $h={34}>
              <ToolGlyph $w={16} $ml={8} $fs={24}>$</ToolGlyph>
              <Chev ml={14} />
              <ToolGlyph $w={24} $ml={13} $fs={25}>%</ToolGlyph>
              <Ico $ml={14} width="14" height="22" viewBox="0 0 14 22">
                <circle cx="7" cy="7" r="6" fill="#444" /><path d="M12.5 8c0 6-3 10-8 13l-1-1.500c3-2 4.500-5 4.500-8z" fill="#444" />
              </Ico>
              <VSep $ml={12} />
              <Ico $ml={6} width="28" height="30" viewBox="0 0 28 30" fill="none">
                <text x="14" y="13" fontSize="14" fill="#444" fontFamily={UI}>.0</text>
                <text x="4" y="28" fontSize="14" fill="#444" fontFamily={UI}>.00</text>
                <path d="M13 8H2M6 4L2 8l4 4" stroke="#2b88d8" strokeWidth="1.5" />
              </Ico>
              <Ico $ml={6} width="28" height="30" viewBox="0 0 28 30" fill="none">
                <text x="4" y="13" fontSize="14" fill="#444" fontFamily={UI}>.00</text>
                <text x="15" y="28" fontSize="14" fill="#444" fontFamily={UI}>.0</text>
                <path d="M2 23h12M10 19l4 4-4 4" stroke="#2b88d8" strokeWidth="1.5" />
              </Ico>
            </ToolRow>
          </GroupBody>
          <GroupLabel $pr={22}>Number</GroupLabel>
          <LauncherIcon />
        </Group>

        <Group $w={291.5}>
          <GroupBody $pl={14}>
            <Big $w={108}>
              <BigIcon>
                <Grid cols={3} rows={3}>
                  <rect x="15" y="3" width="18" height="12" fill="#f59c9c" stroke="#d92a2a" strokeWidth="1.5" />
                  <rect x="15" y="15" width="18" height="12" fill="#6fb0e8" />
                  <rect x="15" y="27" width="18" height="12" fill="#f59c9c" stroke="#d92a2a" strokeWidth="1.5" />
                </Grid>
              </BigIcon>
              <BigText>Conditional</BigText>
              <BigText>Formatting<Chev /></BigText>
            </Big>
            <Big $w={90}>
              <BigIcon>
                <Grid>
                  <rect x="15" y="15" width="29" height="24" fill="#6fb0e8" />
                  <Brush />
                </Grid>
              </BigIcon>
              <BigText>Format as</BigText>
              <BigText>Table<Chev /></BigText>
            </Big>
            <Big $w={66}>
              <BigIcon>
                <Grid rows={3} cols={4}>
                  <rect x="8" y="11" width="28" height="22" fill="#6fb0e8" />
                  <Brush />
                </Grid>
              </BigIcon>
              <BigText>Cell</BigText>
              <BigText>Styles<Chev /></BigText>
            </Big>
          </GroupBody>
          <GroupLabel>Styles</GroupLabel>
        </Group>

        <Group $w={139}>
          <GroupBody $col $pl={16}>
            <ToolRow>
              <CellSmall><path d="M14 5H4l4-3M4 5l4 3" stroke="#2b88d8" strokeWidth="1.5" /><rect x="11" y="5" width="6" height="14" fill="#2b88d8" /></CellSmall>
              <CellLabel $w={57}>Insert</CellLabel><Chev />
            </ToolRow>
            <ToolRow>
              <CellSmall><rect x="4" y="6" width="8" height="12" fill="#2b88d8" /><path d="M14 7l8 9M22 7l-8 9" stroke="#e33" strokeWidth="2" /></CellSmall>
              <CellLabel $w={63}>Delete</CellLabel><Chev />
            </ToolRow>
            <ToolRow>
              <CellSmall><rect x="8" y="8" width="8" height="8" fill="#2b88d8" /><path d="M2 4h21" stroke="#2b88d8" strokeWidth="1.5" /></CellSmall>
              <CellLabel $w={61}>Format</CellLabel><Chev />
            </ToolRow>
          </GroupBody>
          <GroupLabel>Cells</GroupLabel>
        </Group>

        <Group $w={211.5}>
          <GroupBody $pl={16}>
            <ToolCol $w={50}>
              <ToolRow $h={34} $mt={3}>
                <Ico $ml={2} width="20" height="26" viewBox="0 0 20 26" fill="none" stroke="#333" strokeWidth="1.5"><path d="M19 1H2l8 12-8 12h17" /></Ico>
                <Chev ml={13} />
              </ToolRow>
              <ToolRow $h={34}>
                <Ico width="24" height="22" viewBox="0 0 24 22" fill="none">
                  <rect x="1" y="1" width="22" height="20" stroke="#444" strokeWidth="1.5" />
                  <path d="M1 4h22" stroke="#444" strokeWidth="2" />
                  <path d="M12 7v11M8 14l4 4 4-4" stroke="#2b88d8" strokeWidth="1.5" />
                </Ico>
                <Chev ml={6} />
              </ToolRow>
              <ToolRow $h={32}>
                <Ico width="24" height="26" viewBox="0 0 24 26" fill="none" stroke="#9a3fb0" strokeWidth="1.5">
                  <path d="M12 1l11 12-12 12L1 14z" /><path d="M1 14l7-7 10 11-7 7z" fill="#b779c6" />
                </Ico>
                <Chev ml={6} />
              </ToolRow>
            </ToolCol>
            <Big $w={65}>
              <BigIcon>
                <Ico width="46" height="48" viewBox="0 0 46 48" fill="none">
                  <text x="0" y="21" fontSize="24" fill="#2b88d8" fontFamily={UI}>A</text>
                  <text x="1" y="46" fontSize="24" fill="#444" fontFamily={UI}>Z</text>
                  <path d="M20 8h25L36 22v16l-6-3V22z" stroke="#555" strokeWidth="1.5" />
                </Ico>
              </BigIcon>
              <BigText>Sort &amp;</BigText>
              <BigText>Filter<Chev /></BigText>
            </Big>
            <Big $w={67}>
              <BigIcon>
                <Ico width="46" height="48" viewBox="0 0 46 48" fill="none" stroke="#444" strokeWidth="1.5">
                  <circle cx="28" cy="17" r="16" fill="#fafafa" /><path d="M17 29L3 47" />
                </Ico>
              </BigIcon>
              <BigText>Find &amp;</BigText>
              <BigText>Select<Chev /></BigText>
            </Big>
          </GroupBody>
          <GroupLabel>Editing</GroupLabel>
        </Group>

        <Group $w={94.5}>
          <GroupBody>
            <Big $w={94}>
              <BigIcon>
                <Ico $mt={2} width="42" height="44" viewBox="0 0 42 44" fill="none" stroke="#d83b01" strokeWidth="1.6">
                  <rect x="1" y="1" width="40" height="42" />
                  <rect x="5" y="7" width="14" height="14" /><rect x="23" y="7" width="14" height="14" />
                  <rect x="5" y="25" width="14" height="14" /><rect x="23" y="25" width="14" height="14" />
                </Ico>
              </BigIcon>
              <BigText>Add-ins</BigText>
            </Big>
          </GroupBody>
          <GroupLabel>Add-ins</GroupLabel>
        </Group>

        <Group $w={91.5}>
          <GroupBody>
            <Big $w={91}>
              <BigIcon>
                <Ico $mt={2} width="44" height="44" viewBox="0 0 44 44" fill="none">
                  <rect x="2" y="1" width="40" height="42" fill="#fff" stroke="#777" />
                  <rect x="2" y="1" width="40" height="6" fill="#7a7a7a" />
                  <path d="M2 16h40M2 26h40M2 36h40M14 7v36M28 7v36" stroke="#bbb" />
                  <circle cx="20" cy="20" r="12" fill="#fff" stroke="#555" strokeWidth="1.6" />
                  <rect x="15" y="18" width="3" height="9" fill="#777" /><rect x="19" y="13" width="4" height="14" fill="#2b88d8" /><rect x="24" y="20" width="3" height="7" fill="#777" />
                  <path d="M29 29l12 13" stroke="#555" strokeWidth="2" />
                </Ico>
              </BigIcon>
              <BigText>Analyze</BigText>
              <BigText>Data</BigText>
            </Big>
          </GroupBody>
          <GroupLabel>&nbsp;</GroupLabel>
        </Group>
        <Collapse width="14" height="8" viewBox="0 0 14 8" fill="none" stroke="#444" strokeWidth="1.4"><path d="M1 7l6-6 6 6" /></Collapse>
      </Ribbon>

      <SheetRow>
        <Sheet>
          <Banner>
            <BannerTitle>AIRLINES FEEDBACK ANALYSIS</BannerTitle>
            <NavBtn $ml={340} $w={127}>Summary</NavBtn>
            <NavBtn $ml={11} $w={255}>Services Feedback</NavBtn>
          </Banner>
          <Board>
            <Column $w={305}>
              <Slicer $accent="#4ea72e" $w={284} $h={218} $mt={38} $ml={8}>
                <SlicerHead $accent="#4ea72e">Age<SlicerToolsRow /></SlicerHead>
                <AgeBody>
                  <AgeGrid>
                    {["17-26", "27-36", "37-46", "47-56", "57-66", "67-76", "7-16", "77-86"].map(a => (
                      <Item key={a} $h={49} $bg="#4ea72e">{a}</Item>
                    ))}
                    <Item $h={49} $bg="#b4e5a2" $fg="#5f8f4d">&lt;7</Item>
                    <Item $h={49} $bg="#b4e5a2" />
                  </AgeGrid>
                  <Scroll />
                </AgeBody>
              </Slicer>
              <Slicer $accent="#0f9ed5" $w={286} $h={198} $mt={15} $ml={5}>
                <SlicerHead $accent="#0f9ed5">Class<SlicerToolsRow /></SlicerHead>
                <ClassList>
                  {["Business", "Economy", "Economy Plus"].map(c => <Item key={c} $h={37} $bg="#0f9ed5">{c}</Item>)}
                </ClassList>
              </Slicer>
              <Slicer $accent="#e97132" $w={285} $h={158} $mt={16} $ml={6}>
                <SlicerHead $accent="#e97132">Satisfaction<SlicerToolsRow /></SlicerHead>
                <ClassList $mt={4} $gap={5}>
                  <Item $h={49} $bg="#e97132">Neutral or Dissatisfied</Item>
                  <Item $h={47} $bg="#e97132">Satisfied</Item>
                </ClassList>
              </Slicer>
            </Column>
            <Column $w={493}>
              <ChartBox $w={477} $h={299} $mt={38}><AgeChart /></ChartBox>
              <ChartBox $w={481} $h={288} $mt={14} $ml={2}><PieChart /></ChartBox>
            </Column>
            <Column $w={502}>
              <ChartBox $w={495} $h={332} $mt={38}><WifiChart /></ChartBox>
              <ChartBox $w={478} $h={241} $mt={26} $ml={7}><TravelChart /></ChartBox>
            </Column>
            <Column $w={530}>
              <ChartBox $w={512} $h={352} $mt={40} $ml={10}><CleanChart /></ChartBox>
              <ChartBox $w={522} $h={234} $mt={12}><StackChart /></ChartBox>
            </Column>
          </Board>
          <Plane width="50" height="46" viewBox="0 0 50 46" fill="none" stroke="#fff" strokeWidth="1.4">
            <path d="M48 3C49 6 46 8 43 10L34 15 33 43 30 44 24 21 14 28 13 38 11 37 9 29 2 24 4 22 11 24 21 17 4 6 6 3 31 12 40 5C43 3 46 2 48 3Z" />
          </Plane>
          <SelCell />
        </Sheet>
        <VScroll>
          <VBtn><Ico width="12" height="8" viewBox="0 0 12 8"><path d="M6 0l6 8H0z" fill="#333" /></Ico></VBtn>
          <VThumb />
          <VBtn><Ico width="12" height="8" viewBox="0 0 12 8"><path d="M6 8L0 0h12z" fill="#333" /></Ico></VBtn>
        </VScroll>
      </SheetRow>

      <TabBar>
        <NavArrow $dir="l" $c="#bdbdbd" $ml={29} />
        <NavArrow $dir="r" $c="#217346" $ml={28} />
        <SheetTab $active $w={150} $ml={52}>DASHBOARD</SheetTab>
        <SheetTab $w={208} $sep>SERVICES INSIGHTS</SheetTab>
        <SheetTab $w={51} $sep>Q1</SheetTab>
        <SheetTab $w={51} $sep>Q2</SheetTab>
        <SheetTab $w={51} $sep>Q3</SheetTab>
        <SheetTab $w={68} $sep>Q4.1</SheetTab>
        <SheetTab $w={68} $sep>Q4.2</SheetTab>
        <SheetTab $w={51} $sep>Q5</SheetTab>
        <SheetOverflow>Insight1(GenderVsPurpose</SheetOverflow>
        <More>...</More>
        <AddSheet>+</AddSheet>
        <HScroll>
          <ScrollBtn><NavArrow $dir="l" $c="#333" $ml={0} /></ScrollBtn>
          <HThumb />
          <ScrollBtn $ml={56}><NavArrow $dir="r" $c="#333" $ml={0} /></ScrollBtn>
        </HScroll>
      </TabBar>

      <StatusBar>
        Ready
        <Ico $ml={30} width="22" height="24" viewBox="0 0 22 24" fill="none" stroke="#555" strokeWidth="1.3">
          <path d="M1 3h20v7M1 3v18h9M1 7h20M4 12h5M4 16h5" />
          <circle cx="16" cy="17" r="5" /><circle cx="16" cy="17" r="2" fill="#555" />
        </Ico>
        <Ico $ml={23} width="23" height="26" viewBox="0 0 23 26" fill="none" stroke="#555" strokeWidth="1.3">
          <circle cx="11" cy="4" r="3" /><path d="M1 6l6 4v6l-4 8M21 6l-6 4v4M10 18l9 7M19 18l-9 7" />
        </Ico>
        <StatusText $ml={5}>Accessibility: Investigate</StatusText>
        <ViewBtn $on $ml={1149}>
          <Ico width="20" height="20" viewBox="0 0 20 20" fill="none" stroke="#444"><path d="M1 1h18v18H1zM1 7h18M1 13h18M7 1v18M13 1v18" /></Ico>
        </ViewBtn>
        <Ico $ml={20} width="21" height="22" viewBox="0 0 21 22" fill="none" stroke="#444" strokeWidth="1.3"><path d="M1 1h19v20H1zM5 5h11v12H5zM7 8h7M7 11h7M7 14h7" /></Ico>
        <Ico $ml={38} width="20" height="22" viewBox="0 0 20 22" fill="none" stroke="#444" strokeWidth="1.3"><path d="M1 1h18v20H1zM1 14h12V1" /></Ico>
        <Ico $ml={28} width="10" height="2" viewBox="0 0 10 2"><rect width="10" height="2" fill="#666" /></Ico>
        <Zoomer />
        <Ico $ml={7} width="12" height="12" viewBox="0 0 12 12" stroke="#666" strokeWidth="1.2"><path d="M6 0v12M0 6h12" /></Ico>
        <StatusText $ml={19}>85%</StatusText>
      </StatusBar>
    </Page>
  )
}
